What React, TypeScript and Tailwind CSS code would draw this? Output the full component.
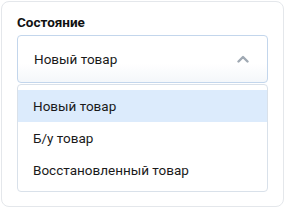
import { useState } from "react";

const options = ["Новый товар", "Б/у товар", "Восстановленный товар"];

export default function App() {
  const [value, setValue] = useState(options[0]);

  return (
    <div className="w-[285px] h-[208px] p-px bg-white" style={{ fontFamily: "Roboto, 'Open Sans', sans-serif" }}>
      <div className="h-full rounded-lg border border-[#e4e7eb] bg-white px-[15px] pt-[11px]">
        <div className="text-[13.5px] font-bold leading-[18px] text-[#111]">Состояние</div>

        {/* Select */}
        <div className="mt-[4px] flex h-[48px] items-center justify-between rounded-[4px] border border-[#c3d6ec] bg-gradient-to-b from-white from-60% to-[#f4f7fa] pl-[16px] pr-[18px]">
          <span className="text-[13.5px] text-[#1a1a1a]">{value}</span>
          <svg width="12" height="8" viewBox="0 0 12 8" fill="none" stroke="#a0a9b3" strokeWidth="2.4" strokeLinecap="round" strokeLinejoin="round">
            <path d="M1.5 6.5 6 2l4.5 4.5" />
          </svg>
        </div>

        {/* Options */}
        <div className="mt-[1px] rounded-[4px] border border-[#d9e1ea] bg-white py-[5px]">
          {options.map((o) => (
            <div
              key={o}
              onClick={() => setValue(o)}
              className={`flex h-[32px] items-center px-[15px] text-[13.5px] text-[#1a1a1a] ${o === value ? "bg-[#dcebfc]" : ""}`}
            >
              {o}
            </div>
          ))}
        </div>
      </div>
    </div>
  );
}
